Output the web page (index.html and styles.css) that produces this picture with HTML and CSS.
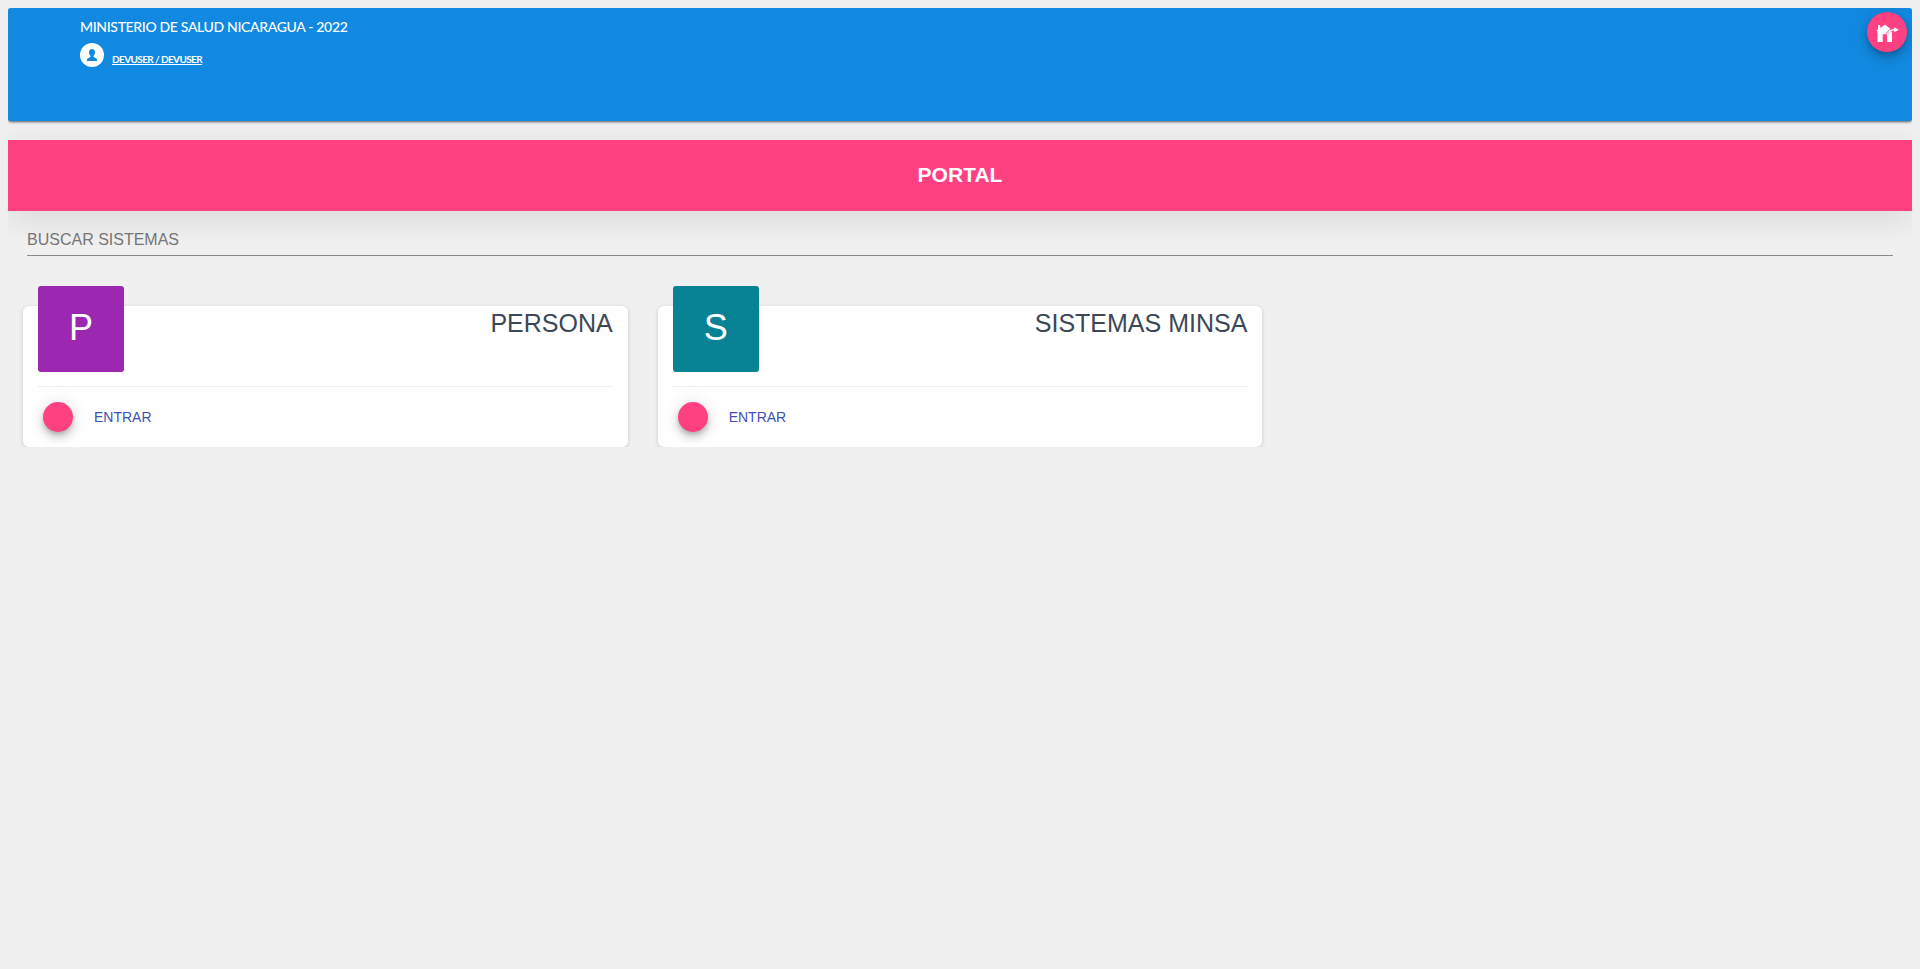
FILE: index.html
```html
<!DOCTYPE html>
<html lang="es">
<head>
<meta charset="utf-8">
<title>Portal</title>
<link rel="stylesheet" href="styles.css">
</head>
<body>
<header class="header">
  <div class="org">MINISTERIO DE SALUD NICARAGUA - 2022</div>
  <div class="user">
    <svg class="avatar" viewBox="0 0 24 24"><circle cx="12" cy="12" r="12" fill="#fff"/><path d="M12 6c2 0 3 1.300 3 3.300 0 1.500-.6 2.500-1.400 3.300v1.500c1.300.7 3.600 1 3.600 3.900H6.800c0-2.900 2.300-3.200 3.600-3.900v-1.500C9.600 11.800 9 10.800 9 9.300 9 7.300 10 6 12 6z" fill="#1289e0"/></svg>
    <a class="user-link">DEVUSER / DEVUSER</a>
  </div>
  <button class="exit" aria-label="Salir">
    <svg width="24" height="24" viewBox="0 0 24 24"><path d="M3.200 5h1.900v3.200L10 4.500l7 5.700V22h-4.700v-7.700H7.700V22H2.500v-9.200H2l.8-2.300z" fill="#fff"/><path d="M1.800 11l4-3.200" stroke="#fff" stroke-width="1.300"/><path d="M12 14.400c1.500-2.900 4-4.600 7.500-4.700" fill="none" stroke="#ff4081" stroke-width="2.800"/><path d="M12.300 22v-6.700l2-2 2.700-1V22z" fill="#fff"/><path d="M12 14.500c1.500-2.900 4-4.700 7.500-4.800" fill="none" stroke="#fff" stroke-width="1.400"/><path d="M19.200 7.300l4.600 2.400-4.600 2.500z" fill="#fff"/></svg>
  </button>
</header>
<main>
  <h1 class="banner">PORTAL</h1>
  <div class="search"><input class="search-input" type="text" placeholder="BUSCAR SISTEMAS"></div>
  <section class="cards">
    <article class="card">
      <div class="card-top">
        <div class="tile purple">P</div>
        <h2 class="card-title">PERSONA</h2>
      </div>
      <div class="card-footer"><span class="dot"></span><a class="enter">ENTRAR</a></div>
    </article>
    <article class="card">
      <div class="card-top">
        <div class="tile teal">S</div>
        <h2 class="card-title">SISTEMAS MINSA</h2>
      </div>
      <div class="card-footer"><span class="dot"></span><a class="enter">ENTRAR</a></div>
    </article>
  </section>
</main>
</body>
</html>
```
FILE: styles.css
```css
* { box-sizing: border-box; }
body {
  margin: 8px;
  background: #f0f0f0;
  font-family: "Liberation Sans", Arial, sans-serif;
}
.header {
  position: relative;
  height: 113px;
  padding: 9px 72px;
  border-radius: 3px;
  background: #1289e0;
  color: #fff;
  font-family: Lato, sans-serif;
  box-shadow: 0 1px 3px rgba(0, 0, 0, .4), 0 1px 2px rgba(0, 0, 0, .3);
}
.org {
  font-size: 14px;
  line-height: 20px;
  font-weight: 500;
  letter-spacing: -.34px;
  white-space: nowrap;
}
.user { display: flex; gap: 8px; margin-top: 6px; }
.avatar { width: 24px; height: 24px; }
.user-link {
  margin-top: 10px;
  font-size: 10px;
  line-height: 12px;
  font-weight: 700;
  letter-spacing: -.6px;
  text-decoration: underline;
  white-space: nowrap;
}
.exit {
  position: absolute;
  top: 4px;
  right: 5px;
  display: flex;
  align-items: center;
  justify-content: center;
  width: 40px;
  height: 40px;
  padding: 0;
  border: 0;
  border-radius: 50%;
  background: #ff4081;
  box-shadow: 0 3px 5px -1px rgba(0, 0, 0, .2), 0 6px 10px rgba(0, 0, 0, .14), 0 1px 18px rgba(0, 0, 0, .12);
}
.banner {
  height: 71px;
  margin: 19px 0 0;
  background: #ff4081;
  color: #fff;
  font-size: 21px;
  line-height: 69px;
  text-align: center;
  box-shadow: 0 8px 32px rgba(0, 0, 0, .1);
}
.search { padding: 10px 19px 0; }
.search-input {
  display: block;
  width: 100%;
  height: 35px;
  padding: 3px 0 0;
  border: 0;
  border-bottom: 1px solid #8a8a8a;
  background: transparent;
  font: 16px "Liberation Sans", Arial, sans-serif;
}
.search-input::placeholder { color: #757575; }
.cards {
  display: grid;
  grid-template-columns: repeat(3, 1fr);
  gap: 30px;
  padding: 50px 15px 0;
}
.card {
  height: 141px;
  padding: 0 15px;
  border-radius: 6px;
  background: #fff;
  box-shadow: 0 1px 4px rgba(0, 0, 0, .16);
}
.card-top { display: flex; justify-content: space-between; height: 80px; }
.tile {
  width: 86px;
  height: 86px;
  margin-top: -20px;
  border-radius: 3px;
  color: #fff;
  font-size: 36px;
  line-height: 84px;
  text-align: center;
}
.purple { background: #9c27b0; }
.teal { background: #088395; }
.card-title {
  margin: 3px 0 0;
  color: #3c4858;
  font-size: 25px;
  font-weight: 400;
  line-height: 28px;
}
.card-footer {
  display: flex;
  align-items: center;
  gap: 21px;
  height: 61px;
  padding: 0 5px;
  border-top: 1px solid #eee;
}
.dot {
  width: 30px;
  height: 30px;
  border-radius: 50%;
  background: #ff4081;
  box-shadow: 0 3px 5px -1px rgba(0, 0, 0, .2), 0 6px 10px rgba(0, 0, 0, .14), 0 1px 18px rgba(0, 0, 0, .12);
}
.enter { color: #3f51b5; font-size: 14px; line-height: 20px; }
```
